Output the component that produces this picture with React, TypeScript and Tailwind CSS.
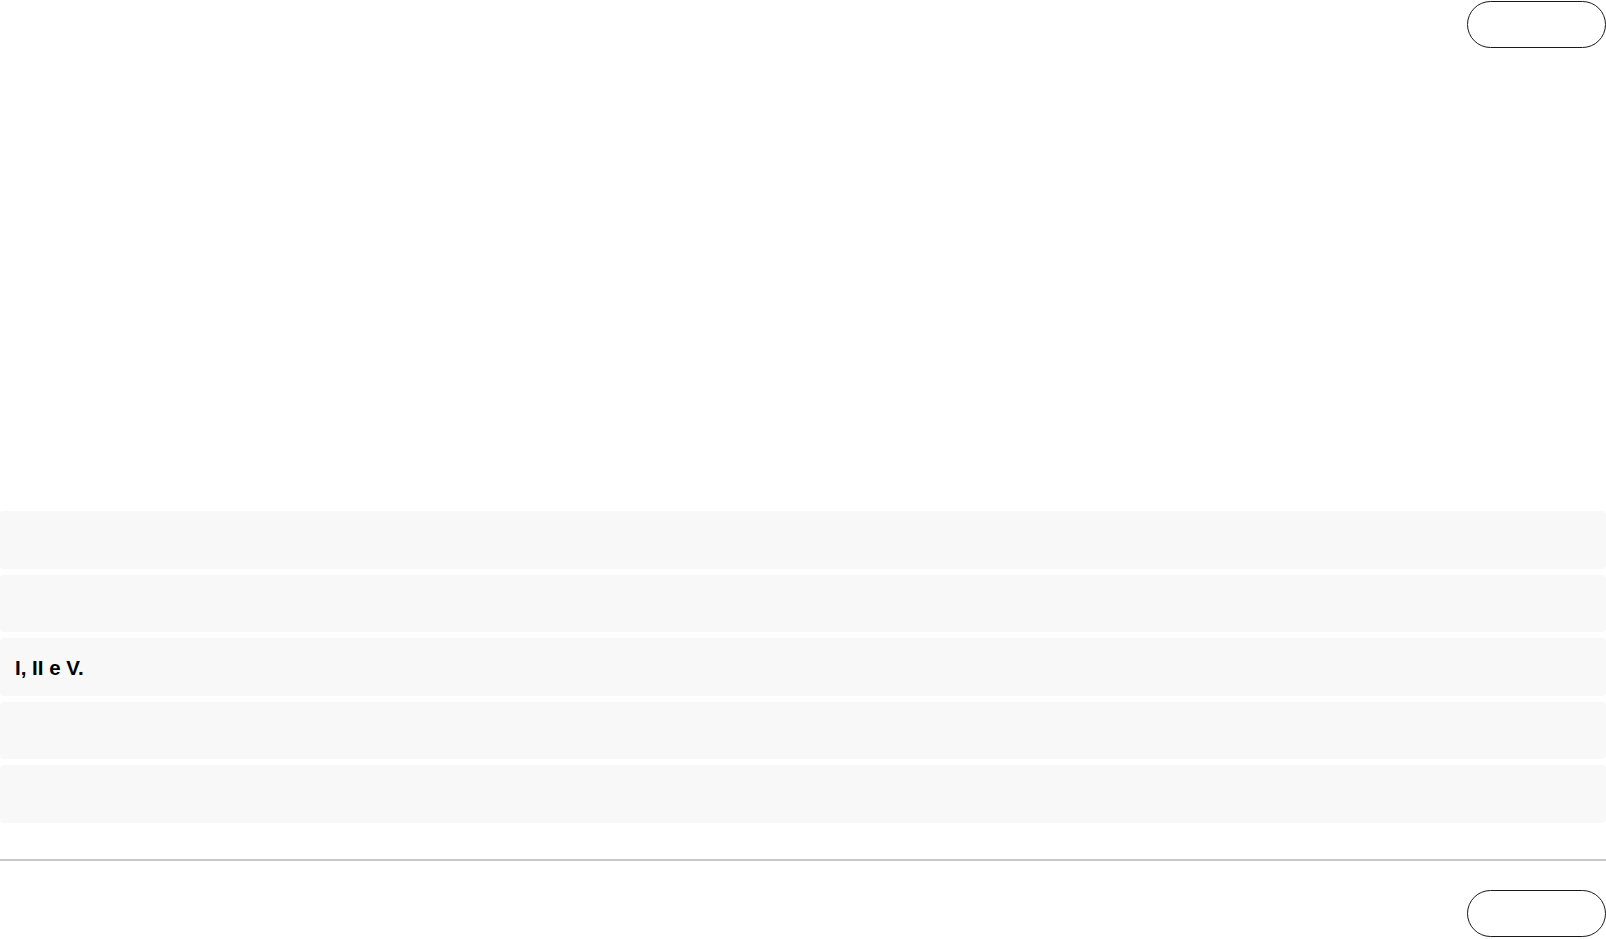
export default function App() {
  const rows = ["", "", "I, II e V.", "", ""];
  return (
    <div className="w-[1606px] h-[939px] bg-white overflow-hidden" style={{ fontFamily: '"Liberation Sans", Arial, sans-serif' }}>
      <div className="flex justify-end pt-[1px]">
        <button className="h-[47px] w-[139px] rounded-full border-[1.5px] border-[#1a1a1a] bg-white"></button>
      </div>
      <div className="h-[463px]"></div>
      <div className="flex flex-col">
        {rows.map((r, i) => (
          <div key={i} className="h-[57.5px] mb-[6px] rounded-[4px] bg-[#f8f8f8] flex items-center px-[15px]">
            <span className="text-[20.5px] leading-[24px] font-bold text-black pt-[2px]">{r}</span>
          </div>
        ))}
      </div>
      <div className="h-[30.5px]"></div>
      <div className="h-[2px] bg-[#c8c8c8]"></div>
      <div className="flex justify-end pt-[29px]">
        <button className="h-[47px] w-[139px] rounded-full border-[1.5px] border-[#1a1a1a] bg-white"></button>
      </div>
    </div>
  );
}
